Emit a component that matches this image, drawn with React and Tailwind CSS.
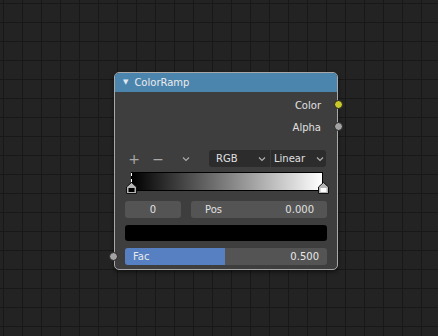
import React from 'react';

function Chevron({ className }) {
  return (
    <svg width="8" height="6" viewBox="0 0 8 6" className={className}>
      <path d="M1 1.5 L4 4.5 L7 1.5" fill="none" stroke="currentColor" strokeWidth="1.2" />
    </svg>
  );
}

function Handle({ fill }) {
  return (
    <svg width="11" height="12" viewBox="0 0 11 12">
      <path d="M5.5 0.5 L10.5 5 L10.5 11.5 L0.5 11.5 L0.5 5 Z" fill="#b5b5b5" stroke="#111" strokeWidth="1" />
      <rect x="2.5" y="6" width="6" height="4" fill={fill} />
    </svg>
  );
}

export default function App() {
  return (
    <div
      className="relative w-[438px] h-[336px] overflow-hidden bg-[#232323] bg-[linear-gradient(to_right,#181818_1px,transparent_1px),linear-gradient(to_bottom,#181818_1px,transparent_1px)] bg-[size:19px_19px] bg-[position:3px_3px]"
      style={{ fontFamily: '"DejaVu Sans", sans-serif' }}
    >
      {/* node */}
      <div className="absolute left-[114px] top-[72px] w-[224px] h-[198px] rounded-[5px] border border-[#a8a8a8] bg-[#3e3e3e] shadow-[0_2px_4px_rgba(0,0,0,0.5)]">
        <div className="h-[19px] rounded-t-[4px] bg-[#4b84ad] flex items-center pl-[8px] gap-[6px] text-[10px] text-[#ececec]">
          <span className="text-[7px] text-[#dfe8f0]">▼</span>
          <span>ColorRamp</span>
        </div>

        <div className="mt-[2px] h-[22px] flex items-center justify-end pr-[16px] text-[10px] text-[#e0e0e0]">Color</div>
        <div className="h-[22px] flex items-center justify-end pr-[16px] text-[10px] text-[#e0e0e0]">Alpha</div>

        {/* toolbar */}
        <div className="mt-[12px] h-[17px] flex items-center pl-[13px] pr-[11px]">
          <span className="w-[12px] text-center text-[14px] leading-none text-[#a8a8a8]">+</span>
          <span className="ml-[12px] w-[12px] text-center text-[14px] leading-none text-[#a8a8a8]">−</span>
          <span className="ml-[16px] w-[12px] flex justify-center text-[#a8a8a8]"><Chevron /></span>
          <div className="ml-auto flex h-[17px] w-[117px] rounded-[3px] bg-[#2c2c2c] text-[10px] text-[#e0e0e0]">
            <div className="flex-1 flex items-center pl-[7px] pr-[4px] border-r border-[#3a3a3a]">
              <span>RGB</span>
              <Chevron className="ml-auto text-[#b0b0b0]" />
            </div>
            <div className="flex-1 flex items-center pl-[3px] pr-[2px]">
              <span>Linear</span>
              <Chevron className="ml-auto text-[#b0b0b0]" />
            </div>
          </div>
        </div>

        {/* gradient */}
        <div className="relative mt-[5px] ml-[16px] w-[192px] h-[22px]">
          <div className="h-[19px] border border-black bg-[linear-gradient(to_right,#000,#fff)]" />
          <div className="absolute left-[0px] top-[1px] h-[9px] border-l border-dashed border-white" />
          <div className="absolute left-[-5px] top-[10px]"><Handle fill="#000" /></div>
          <div className="absolute right-[-6px] top-[10px]"><Handle fill="#fff" /></div>
        </div>

        {/* fields */}
        <div className="mt-[7px] mx-[10px] flex gap-[10px] h-[17px] text-[10px] text-[#e0e0e0]">
          <div className="w-[56px] rounded-[3px] bg-[#545454] flex items-center justify-center">0</div>
          <div className="flex-1 rounded-[3px] bg-[#545454] flex items-center pl-[14px] pr-[13px]">
            <span>Pos</span>
            <span className="ml-auto">0.000</span>
          </div>
        </div>

        <div className="mt-[7px] mx-[10px] h-[16px] rounded-[3px] bg-black" />

        <div className="relative mt-[7px] mx-[10px] h-[17px] rounded-[3px] bg-[#545454] overflow-hidden flex items-center text-[10px] text-[#e8e8e8]">
          <div className="absolute left-0 top-0 bottom-0 w-[100px] bg-[#5680c2]" />
          <span className="relative pl-[8px]">Fac</span>
          <span className="relative ml-auto pr-[8px]">0.500</span>
        </div>

        {/* sockets */}
        <div className="absolute right-[-6px] top-[27px] w-[9px] h-[9px] rounded-full bg-[#c9c92b] border border-[#222]" />
        <div className="absolute right-[-6px] top-[49px] w-[9px] h-[9px] rounded-full bg-[#a3a3a3] border border-[#222]" />
        <div className="absolute left-[-6px] top-[179px] w-[9px] h-[9px] rounded-full bg-[#a3a3a3] border border-[#222]" />
      </div>
    </div>
  );
}
